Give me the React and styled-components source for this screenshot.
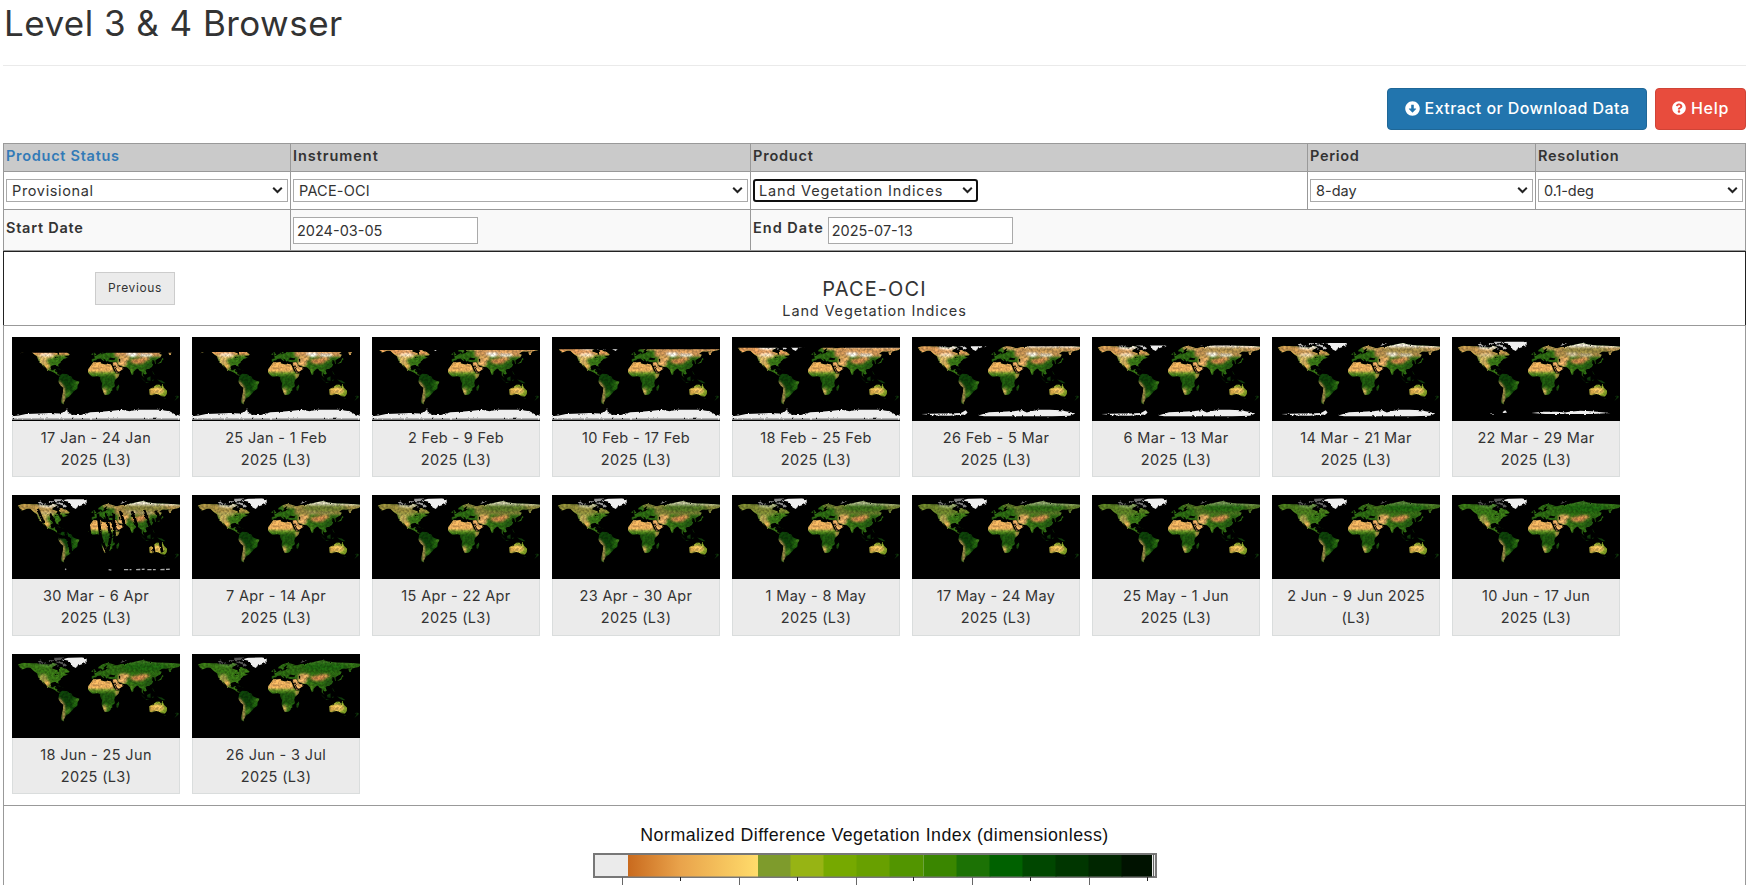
import React from "react";
import styled, { createGlobalStyle } from "styled-components";
import { FaArrowAltCircleDown, FaQuestionCircle } from "react-icons/fa";

const GlobalStyle = createGlobalStyle`
  *, *::before, *::after { box-sizing: border-box; }
  body {
    margin: 0;
    background: #fff;
    color: #333;
    font-family: Inter, "Open Sans", sans-serif;
    font-size: 14.5px;
    overflow: hidden;
  }
`;

const Page = styled.main`
  width: 1743px;
  margin-left: 3px;
  height: 885px;
  overflow: hidden;
`;

const Title = styled.h1`
  margin: 0;
  height: 66px;
  padding: 0 0 0 1px;
  border-bottom: 1px solid #eaeaea;
  font-size: 35px;
  line-height: 46px;
  font-weight: 400;
  letter-spacing: 0.45px;
`;

const Toolbar = styled.div`
  display: flex;
  justify-content: flex-end;
  gap: 8px;
  padding: 22px 0 13px;
`;

const ActionButton = styled.button`
  display: flex;
  align-items: center;
  justify-content: center;
  gap: 5px;
  width: ${(p) => p.$width}px;
  height: 42px;
  padding: 0 0 2px;
  border: 1px solid ${(p) => p.$edge};
  border-radius: 4px;
  background: ${(p) => p.$fill};
  color: #fff;
  font: 500 16px Inter, sans-serif;
  letter-spacing: ${(p) => p.$spacing}px;
  white-space: nowrap;
`;

const Filters = styled.section`
  display: grid;
  grid-template-columns: 287px 460px 557px 228px 210px;
  grid-template-rows: 28px 38px 41px;
  border-right: 1px solid #999;
  border-bottom: 1px solid #999;
`;

const Cell = styled.div`
  display: flex;
  align-items: ${(p) => (p.$head ? "flex-start" : "center")};
  gap: 4px;
  grid-column: span ${(p) => p.$span || 1};
  padding: ${(p) => (p.$head ? "2px 2px 0" : "0 2px")};
  border-top: 1px solid #999;
  border-left: 1px solid #999;
  background: ${(p) => p.$fill || "#fff"};
`;

const Label = styled.span`
  font-weight: 600;
  font-size: 14.5px;
  line-height: 19px;
  letter-spacing: ${(p) => p.$spacing || 0.1}px;
  color: ${(p) => (p.$link ? "#337ab7" : "#333")};
  padding: ${(p) => (p.$date ? "0 0 5px" : "0")};
`;

const SelectBox = styled.div`
  position: relative;
  width: ${(p) => (p.$focused ? "225px" : "100%")};
  height: 23px;
`;

const Select = styled.select`
  appearance: none;
  display: block;
  width: 100%;
  height: 23px;
  padding: 0 20px 0 ${(p) => (p.$focused ? 4 : 5)}px;
  border: ${(p) => (p.$focused ? "2px solid #101010" : "1px solid #aaa")};
  border-radius: ${(p) => (p.$focused ? 3 : 0)}px;
  background: #fff;
  color: #333;
  outline: none;
  font: 400 14.5px Inter, sans-serif;
  letter-spacing: ${(p) => p.$spacing || 0}px;
`;

const Chevron = styled.svg`
  position: absolute;
  top: 7px;
  right: 5px;
  width: 11px;
  height: 8px;
  pointer-events: none;
`;

const DateInput = styled.input`
  width: 185px;
  height: 27px;
  padding: 1px 3px 0;
  border: 1px solid #aaa;
  color: #333;
  outline: none;
  font: 400 14.5px Inter, sans-serif;
`;

const Banner = styled.section`
  display: grid;
  grid-template-columns: 1fr auto 1fr;
  height: 74px;
  border: solid #222;
  border-width: 1px 1px 0;
`;

const PreviousButton = styled.button`
  width: 80px;
  height: 33px;
  margin: 20px 0 0 91px;
  padding: 0 0 2px;
  border: 1px solid #ccc;
  background: #ebebeb;
  color: #333;
  font: 400 12px Inter, sans-serif;
  letter-spacing: 0.6px;
`;

const Heading = styled.div`
  padding-top: 23px;
  text-align: center;
`;

const Instrument = styled.div`
  font-size: 20px;
  line-height: 28px;
  letter-spacing: 1.1px;
`;

const Product = styled.div`
  line-height: 16px;
  letter-spacing: 0.85px;
`;

const Gallery = styled.section`
  display: grid;
  grid-template-columns: repeat(9, 168px);
  grid-auto-rows: 140.4px;
  gap: 18px 12px;
  height: 480px;
  padding: 11px 8px 0;
  border: solid #999;
  border-width: 1px 1px 0;
`;

const Card = styled.figure`
  display: flex;
  flex-direction: column;
  margin: 0;
`;

const MapView = styled.svg`
  display: block;
  width: 168px;
  height: 84px;
  background: #000;
`;

const Caption = styled.figcaption`
  flex: 1;
  padding-top: 6px;
  border: 1px solid #dadddd;
  border-top: 0;
  background: #ebebeb;
  text-align: center;
  line-height: 22px;
  letter-spacing: 0.35px;
`;

const Legend = styled.section`
  display: flex;
  flex-direction: column;
  align-items: center;
  height: 90px;
  border: solid #999;
  border-width: 1px 1px 0;
`;

const LegendTitle = styled.div`
  padding-top: 19px;
  height: 47px;
  color: #111;
  font: 400 17.8px/21px "Liberation Sans", sans-serif;
  letter-spacing: 0.48px;
  white-space: nowrap;
`;

const Scale = styled.svg`
  display: block;
  width: 564px;
  height: 33px;
`;

const Defs = styled.svg`
  position: absolute;
  width: 0;
  height: 0;
`;

/* Outlines use longitude for x and negated latitude for y. */
const northAmerica =
  "M-166-68L-156-71-140-70-128-70-115-68-108-68-95-68-94-72-86-69-82-68-86-66-93-62-94-59-86-56-82-55-82-52-79-52-79-55-77-57-78-62-73-62-69-59-65-59-61-56-56-52-60-50-66-50-65-47-60-46-66-44-70-43-71-41-75-38-76-35-81-31-80-26-82-27-83-30-89-30-94-29-97-27-97-22-95-18-91-19-90-21-87-21-88-16-83-15-83-10-79-9-77-8-80-7-85-10-88-13-95-16-105-20-106-23-112-29-115-31-110-23-114-28-117-33-121-35-124-40-126-48-134-54-140-60-148-61-152-59-162-55-157-58-162-60-165-63-161-65-168-66Z";
const southAmerica =
  "M-77-8L-72-12-62-10-52-5-50 0-44 3-35 6-39 13-40 21-48 26-50 30-55 35-58 38-62 40-65 43-67 47-69 51-68 55-74 52-75 46-73 38-71 30-70 19-76 14-81 6-80 0Z";
const africa =
  "M-6-36L10-37 11-33 20-31 24-33 32-31 35-25 38-18 43-12 51-12 48-5 41 2 39 8 41 15 35 20 35 25 32 29 27 34 19 35 16 29 12 18 13 9 9 1 9-4 4-6-8-5-13-9-17-14-17-21-10-30Z M49 12L50 16 47 25 44 24 44 17Z";
const arabia = "M36-30L40-22 44-13 52-17 59-22 56-25 51-25 48-29 44-36 36-36Z";
const eurasia =
  "M-9-37L-9-43-2-44-4-48 2-51 8-54 9-57 11-54 20-55 24-59 30-60 24-60 21-61 25-65 22-66 17-61 18-59 14-55 11-59 5-59 5-62 14-68 25-71 41-67 33-66 44-66 53-68 68-69 73-72 80-73 100-77 112-74 130-72 150-71 170-70 180-69 180-65 177-62 163-59 162-56 157-51 155-58 163-62 155-59 142-59 135-54 141-52 138-46 131-43 127-39 129-35 126-35 125-40 121-40 118-38 122-37 119-35 122-31 120-26 114-22 108-21 106-18 109-12 105-9 101-13 100-8 104-2 98-8 98-16 94-17 90-22 86-21 80-15 80-10 77-8 73-19 70-22 66-25 57-26 51-29 48-30 44-37 36-36 27-37 26-40 29-41 41-41 35-45 30-46 28-42 23-37 19-42 13-45 18-40 16-38 10-44 3-43 0-39Z M49-46L54-46 54-38 50-38Z M-5-50L1-52-2-55-3-58-6-57-3-54Z M-10-52L-6-52-6-55-9-54Z M-24-66L-14-66-18-63Z M131-32L140-35 142-40 145-43 142-45 139-38Z";
const australia =
  "M114 22L122 18 130 12 136 12 140 17 142 11 146 19 153 26 151 34 147 38 140 37 135 33 129 32 118 35 115 34Z";
const islands =
  "M95-5L104 4 105 6 100 1Z M109-2L117-6 117 4 110 3Z M131 1L141 3 149 9 143 9 137 6Z M120 2L124 1 122 5Z M106 6L115 8 107 8Z M121-18L123-14 126-8 122-12Z M-84-22L-75-20-78-22Z M-73-19L-68-18-73-18Z M173 35L178 38 175 41 168 47 172 41Z M145 41L148 41 147 43Z M108-20L111-19 109-18Z";
const greenland =
  "M-73-78L-60-82-30-83-20-80-20-73-30-68-40-65-43-60-50-63-54-70-60-76Z";
const arcticIslands =
  "M-86-74L-72-73-62-66-66-63-75-68-88-71Z M-118-73L-105-73-104-69-116-69Z M-125-74L-118-76-116-73-123-71Z M-90-82L-70-83-76-77-88-76Z M-102-76L-92-77-94-74-100-73Z M-82-66L-80-64-84-63Z M52-71L58-76 67-77 56-72Z M95-79L104-79 103-78 96-77Z";
const southIceFull =
  "M-180 80L-165 78-150 75-120 74-98 73-78 74-67 70-62 65-60 73-45 77-32 77-12 71 10 70 35 68 55 66 72 69 88 66 110 66 135 66 158 69 168 75 180 79V85H-180Z";
const southIceBand =
  "M-160 75L-120 74-98 74-75 73-65 67-61 72-65 76-100 79-130 78Z M-38 78L-15 71 10 70 35 69 55 67 66 72 72 70 90 66 115 66 138 67 160 71 170 74 158 79 120 80 65 80 20 80-25 80Z";
const southIceThin =
  "M-98 73L-90 73-90 74-98 74Z M-72 71L-66 67-62 72-68 73Z M-10 73L15 70 45 70 62 72 72 70 95 68 120 69 140 71 160 73 120 75 60 75 20 75Z";
const southIceDots =
  "M60 70L76 70M86 70L104 69M110 70L128 70M138 70L158 69M27 70L33 71M-66 68L-64 70";

const frames = [
  { range: "17 Jan - 24 Jan", top: 56, green: 0, snow: 1, south: 3 },
  { range: "25 Jan - 1 Feb", top: 58, green: 0, snow: 1, south: 3 },
  { range: "2 Feb - 9 Feb", top: 62, green: 0, snow: 1, south: 3 },
  { range: "10 Feb - 17 Feb", top: 64, green: 0, snow: 1, south: 3 },
  { range: "18 Feb - 25 Feb", top: 67, green: 0, snow: 1, south: 3 },
  { range: "26 Feb - 5 Mar", top: 70, green: 0.05, snow: 0.9, south: 2 },
  { range: "6 Mar - 13 Mar", top: 72, green: 0.1, snow: 0.9, south: 2 },
  { range: "14 Mar - 21 Mar", top: 77, green: 0.15, snow: 0.8, south: 2 },
  { range: "22 Mar - 29 Mar", top: 80, green: 0.2, snow: 0.5, south: 1 },
  { range: "30 Mar - 6 Apr", top: 81, green: 0.25, snow: 0.3, south: 0.5, gaps: true },
  { range: "7 Apr - 14 Apr", top: 83, green: 0.35, snow: 0.1, south: 0 },
  { range: "15 Apr - 22 Apr", top: 83, green: 0.45, snow: 0, south: 0 },
  { range: "23 Apr - 30 Apr", top: 83, green: 0.5, snow: 0, south: 0 },
  { range: "1 May - 8 May", top: 83, green: 0.6, snow: 0, south: 0 },
  { range: "17 May - 24 May", top: 83, green: 0.7, snow: 0, south: 0 },
  { range: "25 May - 1 Jun", top: 83, green: 0.8, snow: 0, south: 0 },
  { range: "2 Jun - 9 Jun", top: 83, green: 0.9, snow: 0, south: 0, wide: true },
  { range: "10 Jun - 17 Jun", top: 83, green: 1, snow: 0, south: 0 },
  { range: "18 Jun - 25 Jun", top: 83, green: 1, snow: 0, south: 0 },
  { range: "26 Jun - 3 Jul", top: 83, green: 1, snow: 0, south: 0 },
];

const clips = [
  ["na", northAmerica],
  ["sa", southAmerica],
  ["af", africa],
  ["eu", eurasia],
  ["au", australia],
];

function MapDefs() {
  return (
    <Defs aria-hidden="true">
      <defs>
        {clips.map(([id, d]) => (
          <clipPath id={id} key={id}>
            <path d={d} />
          </clipPath>
        ))}
        <filter id="soft" x="-30%" y="-30%" width="160%" height="160%" colorInterpolationFilters="sRGB">
          <feGaussianBlur stdDeviation="2" />
        </filter>
        <filter id="terrain" filterUnits="userSpaceOnUse" x="-180" y="-90" width="360" height="180" colorInterpolationFilters="sRGB">
          <feTurbulence type="fractalNoise" baseFrequency="0.2" numOctaves="2" seed="4" result="noise" />
          <feDisplacementMap in="SourceGraphic" in2="noise" scale="4" xChannelSelector="R" yChannelSelector="G" result="shape" />
          <feColorMatrix
            in="noise"
            type="matrix"
            values="2.4 0 0 0 -0.7  2.4 0 0 0 -0.7  2.4 0 0 0 -0.7  0 0 0 0 1"
            result="grain"
          />
          <feComposite in="shape" in2="grain" operator="arithmetic" k1="0.35" k2="0.83" />
        </filter>
        <filter id="rough" filterUnits="userSpaceOnUse" x="-180" y="-90" width="360" height="180" colorInterpolationFilters="sRGB">
          <feTurbulence type="fractalNoise" baseFrequency="0.15" numOctaves="2" seed="9" />
          <feDisplacementMap in="SourceGraphic" scale="6" xChannelSelector="R" yChannelSelector="G" />
        </filter>
      </defs>
    </Defs>
  );
}

function VegetationMap({ frame, id }) {
  const { top, green, snow, south, gaps } = frame;
  const bare = 1 - green;
  const ice = south === 3 ? southIceFull : south === 2 ? southIceBand : southIceThin;
  return (
    <MapView viewBox="-180 -90 360 180" preserveAspectRatio="none">
      <clipPath id={id}>
        <rect x="-180" y={-top} width="360" height={top + 90} />
      </clipPath>
      <g clipPath={`url(#${id})`}>
        <g filter="url(#terrain)">
          <g clipPath="url(#na)">
            <rect x="-180" y="-80" width="140" height="75" fill="#357014" />
            <g filter="url(#soft)">
              <ellipse cx="-113" cy="-38" rx="9" ry="9" fill="#d9b064" opacity={0.95 - green * 0.35} />
              <ellipse cx="-105" cy="-27" rx="6" ry="7" fill="#dca953" />
              <rect x="-172" y="-74" width="120" height="23" fill="#d89556" opacity={bare} />
              <ellipse cx="-110" cy="-48" rx="22" ry="4" fill="#dcb468" opacity={bare} />
              <ellipse cx="-95" cy="-68" rx="30" ry="5" fill="#f4f4f4" opacity={0.95 - green * 0.8} />
              <ellipse cx="-106" cy="-52" rx="16" ry="2.5" fill="#fff" opacity={snow * 0.9} />
            </g>
          </g>
          <g clipPath="url(#sa)">
            <rect x="-85" y="-15" width="55" height="75" fill="#0c3c08" />
            <g filter="url(#soft)">
              <ellipse cx="-45" cy="15" rx="6" ry="11" fill="#20600e" />
              <ellipse cx="-39" cy="8" rx="4" ry="4" fill="#4d7f20" />
              <ellipse cx="-60" cy="32" rx="6" ry="8" fill="#3a7419" />
              <path d="M-80 6L-70 19-70 30-69 52" stroke="#dfa864" strokeWidth="5" fill="none" />
            </g>
          </g>
          <g clipPath="url(#af)">
            <rect x="-20" y="-40" width="75" height="80" fill="#1c520d" />
            <g filter="url(#soft)">
              <rect x="-25" y="-17" width="76" height="9" fill="#5c8b22" />
              <rect x="-25" y="-44" width="64" height="29" fill="#e6aa5b" />
              <ellipse cx="46" cy="-7" rx="4" ry="7" fill="#b8964a" />
              <ellipse cx="18" cy="27" rx="4" ry="8" fill="#dfae60" />
              <ellipse cx="26" cy="24" rx="6" ry="6" fill="#5b9020" opacity=".6" />
            </g>
          </g>
          <path d={arabia} fill="#e2a860" />
          <g clipPath="url(#eu)">
            <rect x="-12" y="-80" width="195" height="82" fill="#2a6411" />
            <g filter="url(#soft)">
              <rect x="40" y="-80" width="147" height="32" fill="#d3955a" opacity={bare * 0.95} />
              <rect x="15" y="-76" width="30" height="14" fill="#d9a263" opacity={bare} />
              <ellipse cx="105" cy="-62" rx="48" ry="8" fill="#1c600e" opacity={green} />
              <ellipse cx="60" cy="-43" rx="13" ry="5" fill="#dda45e" />
              <ellipse cx="56" cy="-33" rx="10" ry="7" fill="#dfa762" />
              <ellipse cx="90" cy="-38" rx="16" ry="6" fill="#cb8549" />
              <ellipse cx="103" cy="-43" rx="12" ry="4" fill="#c8884b" />
              <ellipse cx="75" cy="-18" rx="5" ry="8" fill="#4b821b" />
              <ellipse cx="112" cy="-28" rx="10" ry="8" fill="#215411" />
              <rect x="62" y="-80" width="120" height="12" fill="#f2f2f2" opacity={Math.max(0, 0.95 - green * 0.9)} />
              <path d="M65-54H90M94-51H120M73-50H85" stroke="#fff" strokeWidth="5" opacity={snow} />
            </g>
          </g>
          <g clipPath="url(#au)">
            <rect x="112" y="9" width="44" height="31" fill="#7c9c24" />
            <g filter="url(#soft)">
              <ellipse cx="131" cy="25" rx="15" ry="8" fill="#e0b45a" />
              <ellipse cx="119" cy="27" rx="6" ry="8" fill="#d2a347" />
            </g>
          </g>
          <path d={islands} fill="#0d3309" />
        </g>
        <g filter="url(#rough)">
          <path d={greenland} fill="#eee" />
          <path d={arcticIslands} fill="#ddd" opacity={1 - green * 0.6} />
          <path d="M-88-47L-82-43M39-29L43-20 47-14M49-30L54-26" stroke="#000" strokeWidth="2" fill="none" />
          <path d="M-6-38L10-40 22-35 35-34M29-43L40-43M50-45L51-37" stroke="#000" strokeWidth="2.5" fill="none" />
          <path d="M-115-73L-100-68M-90-74L-70-66" stroke="#000" strokeWidth="2" />
        </g>
        {south > 0.5 && <path d={ice} fill="#eee" filter="url(#rough)" />}
        {south === 3 && <path d="M-180 86.5H180" stroke="#ccc" strokeWidth="1.6" />}
        {south === 0.5 && <path d={southIceDots} stroke="#aaa" strokeWidth="3" strokeDasharray="9 3" />}
        {gaps && (
          <path
            filter="url(#rough)"
            d="M-125-60L-112-30M-99-50L-78-8M-82-55L-64-25M-66-12L-56 20M-57 0L-54 34M-80 0H-63M-20-65L-13-4M4-50L10 0M22-50L30-8M10 0L24 35M38-50L40 12M52-56L67-8M77-55L95-5M103-58L120-10M127-56L145-25M121 10L125 38M137 10L142 33M33-8L25 35"
            stroke="#000"
            strokeWidth="6"
          />
        )}
      </g>
    </MapView>
  );
}

const steps = [
  [165, "#7e9b2c"], [197.5, "#97b414"], [230.5, "#76a900"], [263.5, "#68a000"],
  [296.5, "#529500"], [330.5, "#3a8600"], [363.5, "#1c7205"], [396.5, "#006100"],
  [429.5, "#004700"], [462.5, "#003600"], [495.5, "#002600"], [528.5, "#001200"],
];

function ColorScale() {
  return (
    <Scale viewBox="0 0 564 33">
      <defs>
        <linearGradient id="sand">
          <stop offset="0" stopColor="#c96a1e" />
          <stop offset=".4" stopColor="#e9a34b" />
          <stop offset="1" stopColor="#ffdc6b" />
        </linearGradient>
      </defs>
      <rect x="1" y="1" width="562" height="23" fill="#ebebeb" stroke="#777" strokeWidth="2" />
      <rect x="35" y="2" width="130" height="21.5" fill="url(#sand)" />
      {steps.map(([x, color]) => (
        <rect key={x} x={x} y="2" width={x === 528.5 ? 30.5 : 34} height="21.5" fill={color} />
      ))}
      <path d="M560.5 1V24" stroke="#666" strokeWidth="1" />
      <path d="M29.5 24V32M146.5 24V32M263.5 24V32M379.5 24V32M496.5 24V32" stroke="#666" />
      <path d="M87.5 24V28M204.5 24V28M320.5 24V28M437.5 24V28M554.5 24V28" stroke="#222" />
    </Scale>
  );
}

function Dropdown({ value, focused, spacing }) {
  return (
    <SelectBox $focused={focused}>
      <Select defaultValue={value} $focused={focused} $spacing={spacing}>
        <option>{value}</option>
      </Select>
      <Chevron viewBox="0 0 11 8">
        <path d="M1.2 1.8L5.5 6 9.8 1.8" fill="none" stroke="#222" strokeWidth="2" />
      </Chevron>
    </SelectBox>
  );
}

export default function App() {
  return (
    <Page>
      <GlobalStyle />
      <MapDefs />
      <Title>Level 3 &amp; 4 Browser</Title>
      <Toolbar>
        <ActionButton $width={260} $fill="#2275ae" $edge="#1f6797" $spacing={0.42}>
          <FaArrowAltCircleDown size={15} /> Extract or Download Data
        </ActionButton>
        <ActionButton $width={91} $fill="#e84c3d" $edge="#cf4437" $spacing={0.7}>
          <FaQuestionCircle size={14} /> Help
        </ActionButton>
      </Toolbar>
      <Filters>
        <Cell $head $fill="#cacaca"><Label $link $spacing={0.72}>Product Status</Label></Cell>
        <Cell $head $fill="#cacaca"><Label $spacing={0.95}>Instrument</Label></Cell>
        <Cell $head $fill="#cacaca"><Label $spacing={0.8}>Product</Label></Cell>
        <Cell $head $fill="#cacaca"><Label $spacing={0.7}>Period</Label></Cell>
        <Cell $head $fill="#cacaca"><Label $spacing={0.75}>Resolution</Label></Cell>
        <Cell><Dropdown value="Provisional" spacing={0.65} /></Cell>
        <Cell><Dropdown value="PACE-OCI" spacing={0.2} /></Cell>
        <Cell><Dropdown value="Land Vegetation Indices" focused spacing={0.85} /></Cell>
        <Cell><Dropdown value="8-day" /></Cell>
        <Cell><Dropdown value="0.1-deg" spacing={-0.1} /></Cell>
        <Cell $fill="#f9f9f9"><Label $date $spacing={0.75}>Start Date</Label></Cell>
        <Cell $fill="#f9f9f9"><DateInput defaultValue="2024-03-05" /></Cell>
        <Cell $fill="#f9f9f9" $span={3}>
          <Label $date $spacing={1}>End Date</Label>
          <DateInput defaultValue="2025-07-13" />
        </Cell>
      </Filters>
      <Banner>
        <div><PreviousButton>Previous</PreviousButton></div>
        <Heading>
          <Instrument>PACE-OCI</Instrument>
          <Product>Land Vegetation Indices</Product>
        </Heading>
      </Banner>
      <Gallery>
        {frames.map((frame, i) => (
          <Card key={frame.range}>
            <VegetationMap frame={frame} id={`view${i}`} />
            <Caption>
              {frame.range}{frame.wide ? " 2025" : ""}
              <br />
              {frame.wide ? "(L3)" : "2025 (L3)"}
            </Caption>
          </Card>
        ))}
      </Gallery>
      <Legend>
        <LegendTitle>Normalized Difference Vegetation Index (dimensionless)</LegendTitle>
        <ColorScale />
      </Legend>
    </Page>
  );
}
